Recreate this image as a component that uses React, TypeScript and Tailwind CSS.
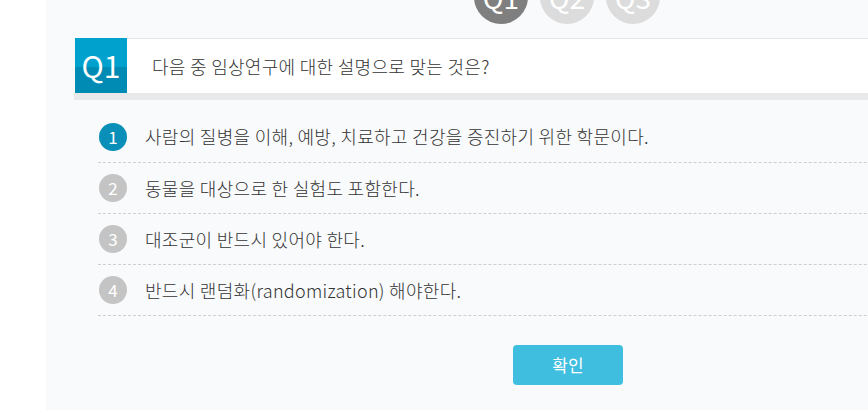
const font = { fontFamily: '"Noto Sans CJK KR", "Noto Sans", sans-serif' }

const options = [
  '사람의 질병을 이해, 예방, 치료하고 건강을 증진하기 위한 학문이다.',
  '동물을 대상으로 한 실험도 포함한다.',
  '대조군이 반드시 있어야 한다.',
  '반드시 랜덤화(randomization) 해야한다.',
]

export default function App() {
  return (
    <div className="flex h-[410px] w-full overflow-hidden bg-white text-[#333]" style={font}>
      <div className="w-[46px] shrink-0 bg-white" />
      <div className="flex-1 overflow-hidden bg-[#f9fafc]">
        <div className="ml-[28px] w-[988px]">
          {/* Question steps */}
          <div className="mt-[-30px] flex justify-center gap-[12px] pr-[2px]">
            {['Q1', 'Q2', 'Q3'].map((q, i) => (
              <div
                key={q}
                className={`flex h-[54px] w-[54px] items-center justify-center rounded-full text-[28px] text-white ${
                  i === 0 ? 'bg-[#7f7f7f]' : 'bg-[#dcdcdc]'
                }`}
              >
                {q}
              </div>
            ))}
          </div>

          {/* Question header */}
          <div className="mt-[14px] flex pl-px">
            <div className="flex h-[55px] w-[52px] shrink-0 items-center justify-center bg-[linear-gradient(#00a1cd_0%,#00a1cd_52%,#008bb4_52%,#008bb4_100%)] text-[30px] text-white">
              Q1
            </div>
            <div className="flex h-[55px] flex-1 items-center border-t border-[#e6e6e6] bg-white pl-[25px] text-[18px] font-light tracking-[0.3px] text-[#333]">
              다음 중 임상연구에 대한 설명으로 맞는 것은?
            </div>
          </div>
          <div className="h-[7px] bg-[#e9e9e9]" />

          {/* Options */}
          <ul className="ml-[24px] mt-[11px]">
            {options.map((o, i) => (
              <li
                key={i}
                className={`flex items-center border-b border-dashed border-[#cfcfcf] pl-px ${i === 0 ? 'h-[52px]' : 'h-[51px]'}`}
              >
                <span
                  className={`flex h-[28px] w-[28px] shrink-0 items-center justify-center rounded-full text-[17px] text-white ${
                    i === 0 ? 'bg-[#0a8fb9]' : 'bg-[#c4c4c4]'
                  }`}
                >
                  {i + 1}
                </span>
                <span className="ml-[18px] text-[18px] font-light tracking-[0.3px] text-[#333]">{o}</span>
              </li>
            ))}
          </ul>

          {/* Submit */}
          <div className="mt-[29px] flex justify-center">
            <button className="h-[40px] w-[110px] rounded-[4px] bg-[#40bedf] text-[17px] text-white">확인</button>
          </div>
        </div>
      </div>
    </div>
  )
}
